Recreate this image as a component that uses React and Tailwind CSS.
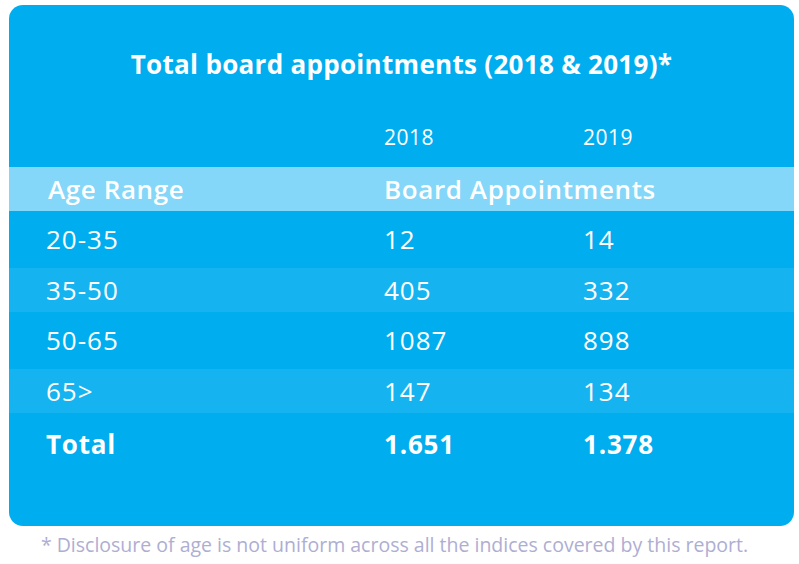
export default function App() {
  const rows = [
    { age: "20-35", a: "12", b: "14" },
    { age: "35-50", a: "405", b: "332", stripe: true },
    { age: "50-65", a: "1087", b: "898" },
    { age: "65>", a: "147", b: "134", stripe: true },
  ];

  return (
    <div className="w-[799px] h-[564px] bg-white pt-[5px] px-[9px] text-white" style={{ fontFamily: "'Open Sans', sans-serif" }}>
      <div className="h-[521px] w-[785px] rounded-[14px] bg-[#00aeef] pt-[41px] overflow-hidden">
        <h1 className="text-center text-[26px] leading-[36px] font-bold tracking-[0.3px]">Total board appointments (2018 &amp; 2019)*</h1>

        <div className="grid grid-cols-[338px_199px_1fr] pl-[37px] mt-[43px] mb-[18px] text-[21px] leading-[24px] tracking-[0.5px]">
          <div></div>
          <div>2018</div>
          <div>2019</div>
        </div>

        {/* header band */}
        <div className="grid grid-cols-[338px_199px_1fr] pl-[37px] h-[44px] items-center bg-[#84d7f8] text-[26px] font-semibold tracking-[0.6px]">
          <div className="pl-[2px]">Age Range</div>
          <div className="col-span-2">Board Appointments</div>
        </div>

        {rows.map((r) => (
          <div
            key={r.age}
            className={
              r.stripe
                ? "grid grid-cols-[338px_199px_1fr] pl-[37px] h-[44px] items-center bg-[#15b4f0] text-[26px] tracking-[1px]"
                : "grid grid-cols-[338px_199px_1fr] pl-[37px] h-[57px] items-center text-[26px] tracking-[1px]"
            }
          >
            <div>{r.age}</div>
            <div>{r.a}</div>
            <div>{r.b}</div>
          </div>
        ))}

        <div className="grid grid-cols-[338px_199px_1fr] pl-[37px] h-[62px] items-center text-[26px] font-bold tracking-[0.8px]">
          <div>Total</div>
          <div>1.651</div>
          <div>1.378</div>
        </div>
      </div>

      <p className="text-center text-[19.5px] leading-[38px] text-[#aeaed2] pr-[10px]">
        * Disclosure of age is not uniform across all the indices covered by this report.
      </p>
    </div>
  );
}
